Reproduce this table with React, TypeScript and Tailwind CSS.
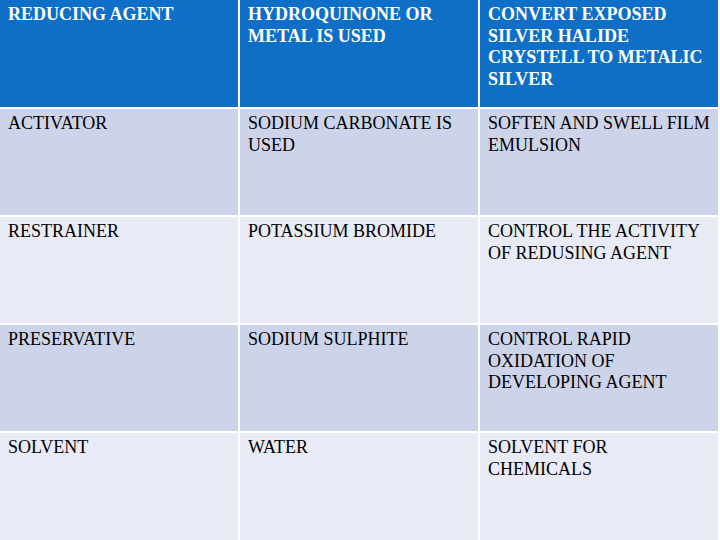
import React from "react";

const rows: [string, string, string][] = [
  ["ACTIVATOR", "SODIUM CARBONATE IS USED", "SOFTEN AND SWELL FILM EMULSION"],
  ["RESTRAINER", "POTASSIUM BROMIDE", "CONTROL THE ACTIVITY OF REDUSING AGENT"],
  ["PRESERVATIVE", "SODIUM SULPHITE", "CONTROL RAPID OXIDATION OF DEVELOPING AGENT"],
  ["SOLVENT", "WATER", "SOLVENT FOR CHEMICALS"],
];

const header = ["REDUCING AGENT", "HYDROQUINONE OR METAL IS USED", "CONVERT EXPOSED SILVER HALIDE CRYSTELL TO METALIC SILVER"];

export default function App() {
  return (
    <div className="w-[720px] h-[540px] bg-white overflow-hidden font-['Liberation_Serif','Times_New_Roman',serif]">
      <div className="grid grid-cols-[238px_238px_238px] grid-rows-[107px_106px_106px_106px_109px] gap-[2px] text-[18px] leading-[21.6px]">
        {header.map((h, i) => (
          <div key={i} className="bg-[#0f6fc6] text-white font-bold pl-2 pr-2 pt-[4px]">
            {h}
          </div>
        ))}
        {rows.map((r, ri) =>
          r.map((c, ci) => (
            <div
              key={ri + "-" + ci}
              className={(ri % 2 === 0 ? "bg-[#cdd4ea]" : "bg-[#e8ebf5]") + " text-black pl-2 pr-2 pt-[4px]"}
            >
              {c}
            </div>
          ))
        )}
      </div>
    </div>
  );
}
